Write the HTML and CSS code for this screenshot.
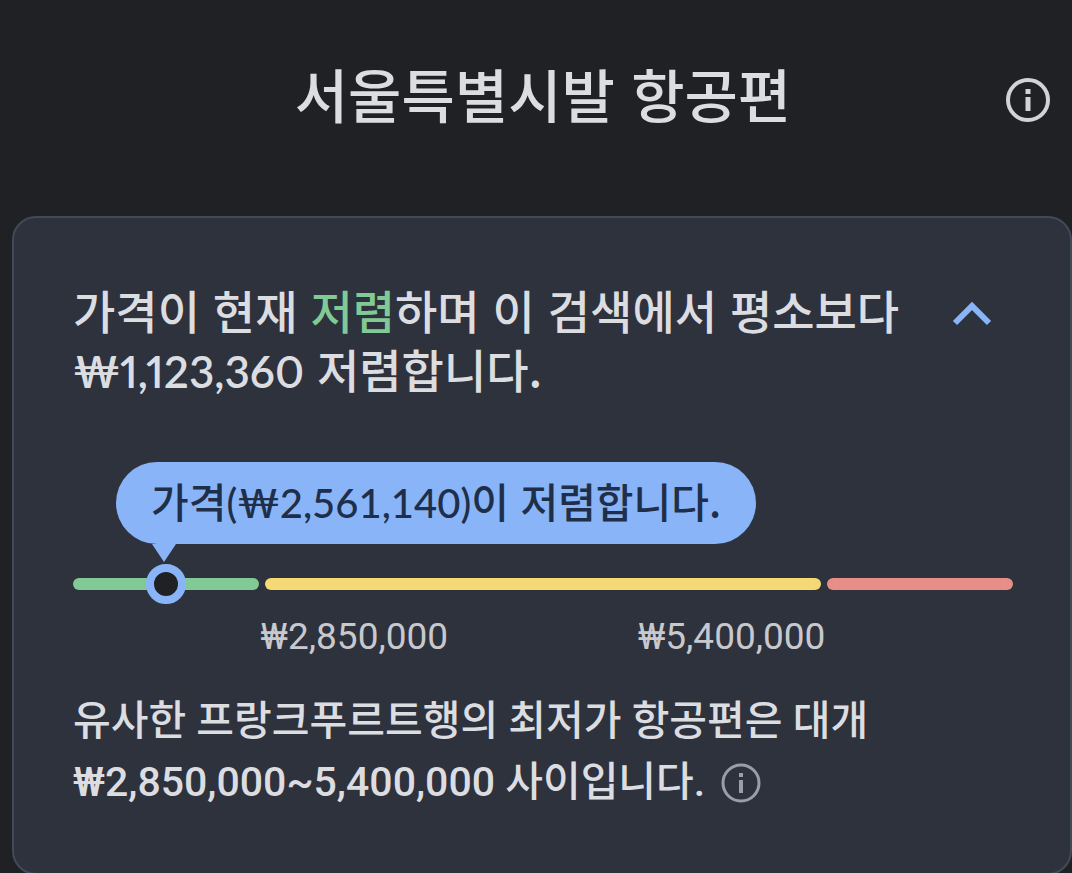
FILE: index.html
```html
<!DOCTYPE html>
<html lang="ko">
<head>
  <meta charset="UTF-8">
  <meta name="viewport" content="width=device-width, initial-scale=1.0">
  <title>서울특별시발 항공편</title>
  <link rel="stylesheet" href="styles.css">
</head>
<body>

<header class="page-header">
  <h1>서울특별시발 항공편</h1>
  <button type="button" class="icon-button header-info" aria-label="정보">
    <svg viewBox="0 0 44 44" width="44" height="44" fill="none" stroke="currentColor">
      <circle cx="22" cy="22" r="20" stroke-width="4"/>
      <path d="M22 19v14M22 11v5" stroke-width="5"/>
    </svg>
  </button>
</header>

<main class="price-card">
  <div class="card-header">
    <h2>가격이 현재 <span class="low">저렴</span>하며 이 검색에서 평소보다 <span class="amount">₩1,123,360</span> 저렴합니다.</h2>
    <button type="button" class="icon-button toggle" aria-label="접기" aria-expanded="true">
      <svg viewBox="0 0 40 24" width="40" height="24" fill="none" stroke="currentColor">
        <path d="M3 21L20 4l17 17" stroke-width="6"/>
      </svg>
    </button>
  </div>

  <div class="price-range">
    <div class="bubble">가격<span class="bubble-amount">(₩2,561,140)</span>이 저렴합니다.</div>
    <div class="bars">
      <div class="bar bar-low"><span class="marker"></span></div>
      <div class="bar bar-typical"></div>
      <div class="bar bar-high"></div>
      <div class="labels">
        <span>₩2,850,000</span>
        <span>₩5,400,000</span>
      </div>
    </div>
  </div>

  <p class="summary">유사한 프랑크푸르트행의 최저가 항공편은 대개 ₩2,850,000~5,400,000 사이입니다.
    <button type="button" class="icon-button summary-info" aria-label="가격 정보">
      <svg viewBox="0 0 40 40" width="40" height="40" fill="none" stroke="currentColor">
        <circle cx="20" cy="20" r="18" stroke-width="3"/>
        <path d="M20 17v13M20 10v4" stroke-width="4"/>
      </svg>
    </button>
  </p>
</main>

</body>
</html>
```

FILE: styles.css
```css
* {
  box-sizing: border-box;
}
body {
  margin: 0;
  background-color: #202124;
  color: #dcdde1;
  font-family: Roboto, "Noto Sans CJK KR", sans-serif;
  font-weight: 500;
}
h1, h2, p {
  margin: 0;
  font-weight: 500;
}
.icon-button {
  display: flex;
  padding: 0;
  border: none;
  background: none;
  color: inherit;
  cursor: pointer;
}
.page-header {
  display: grid;
  grid-template-columns: 1fr auto 1fr;
  align-items: center;
  height: 216px;
  padding: 0 22px 16px 36px;
}
h1 {
  grid-column: 2;
  padding-bottom: 14px;
  font-family: "Noto Sans CJK KR", sans-serif;
  font-size: 58px;
  line-height: 80px;
}
.header-info {
  justify-self: end;
  color: #d2d3d7;
}
.price-card {
  margin-left: 12px;
  padding: 62px 57px 60px 59px;
  border: 2px solid #414b58;
  border-radius: 24px;
  background-color: #2e323d;
}
.card-header {
  display: flex;
  align-items: flex-start;
  justify-content: space-between;
  padding-right: 21px;
}
h2 {
  max-width: 850px;
  font-family: "Noto Sans CJK KR", sans-serif;
  font-size: 46px;
  line-height: 59px;
  word-break: keep-all;
}
.low {
  color: #81c995;
}
.amount {
  font-family: Lato, "Noto Sans CJK KR", sans-serif;
  font-size: 44px;
  font-weight: 600;
  font-variant-numeric: proportional-nums;
  line-height: 1;
}
.toggle {
  margin-top: 22px;
  color: #8ab4f8;
}
.price-range {
  margin-top: 64px;
}
.bubble {
  position: relative;
  width: fit-content;
  margin-left: 43px;
  padding: 0 35px 6px;
  border-radius: 41px;
  background-color: #8ab4f8;
  color: #202f49;
  font-family: "Noto Sans CJK KR", sans-serif;
  font-size: 41px;
  line-height: 76px;
}
.bubble-amount {
  font-family: Lato, "Noto Sans CJK KR", sans-serif;
  font-size: 40px;
  line-height: 1;
}
.bubble::after {
  content: "";
  position: absolute;
  top: 100%;
  left: 36px;
  border: 12px solid transparent;
  border-top: 18px solid #8ab4f8;
  border-bottom: none;
}
.bars {
  display: grid;
  grid-template-columns: 1fr 3fr 1fr;
  column-gap: 6px;
  margin-top: 34px;
}
.bar {
  position: relative;
  height: 12px;
  border-radius: 6px;
}
.bar-low {
  background-color: #81c995;
}
.bar-typical {
  background-color: #f5d975;
}
.bar-high {
  background-color: #e88e89;
}
.marker {
  position: absolute;
  top: 50%;
  left: 50%;
  width: 40px;
  height: 40px;
  border: 8px solid #8ab4f8;
  border-radius: 50%;
  background-color: #202124;
  transform: translate(-50%, -50%);
}
.labels {
  grid-column: 2;
  display: flex;
  justify-content: space-between;
  margin: 22px -4px 0;
  color: #c8c9ce;
  font-size: 37px;
  font-weight: 400;
  line-height: 50px;
}
.summary {
  margin-top: 29px;
  font-size: 41px;
  line-height: 61px;
  word-break: keep-all;
}
.summary-info {
  display: inline-flex;
  margin-left: 6px;
  vertical-align: -7px;
  color: #9a9ea6;
}
```
